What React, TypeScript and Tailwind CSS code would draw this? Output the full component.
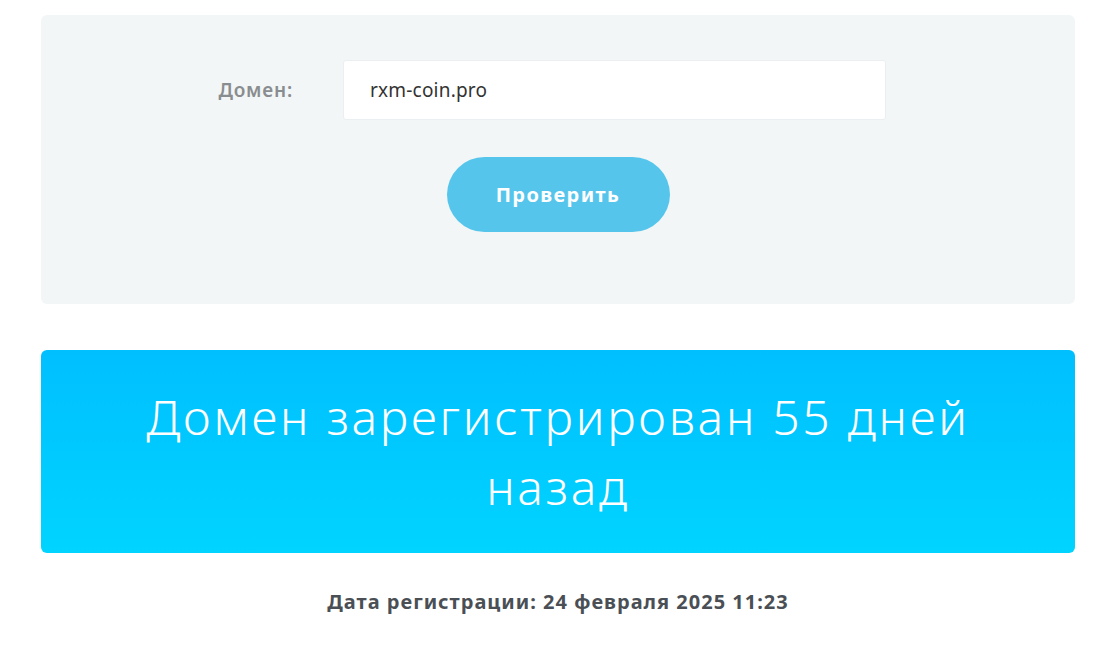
export default function App() {
    return (
        <div className="min-h-screen bg-white font-['Noto_Sans',sans-serif] px-[41px] pt-[15px]">
            {/* Форма проверки */}
            <div className="w-[1034px] h-[289px] bg-[#f3f6f7] rounded-md flex flex-col items-center pt-[45px]">
                <div className="flex items-center w-full">
                    <label className="w-[252px] text-right text-[19px] font-semibold tracking-[0.8px] text-[#8a8d90]">Домен:</label>
                    <div className="ml-[50px] w-[543px] h-[60px] bg-white border border-[#eceff1] rounded-[3px] flex items-center pl-[26px]">
                        <span className="text-[19px] tracking-[0.2px] text-[#333]">rxm-coin.pro</span>
                    </div>
                </div>
                <button className="mt-[37px] w-[223px] h-[75px] rounded-full bg-[#56c5ec] text-white text-[20px] font-bold tracking-[1.4px]">
                    Проверить
                </button>
            </div>

            {/* Результат */}
            <div className="mt-[46px] w-[1034px] h-[203px] rounded-md bg-gradient-to-b from-[#00bfff] to-[#00d4ff] flex items-center justify-center px-[60px]">
                <p className="text-center text-white text-[48px] font-light tracking-[2.7px] leading-[70px]">
                    Домен зарегистрирован 55 дней назад
                </p>
            </div>

            <p className="mt-[34px] w-[1034px] text-center text-[20px] font-bold tracking-[1px] text-[#4a4f55]">
                Дата регистрации: 24 февраля 2025 11:23
            </p>
        </div>
    );
}
